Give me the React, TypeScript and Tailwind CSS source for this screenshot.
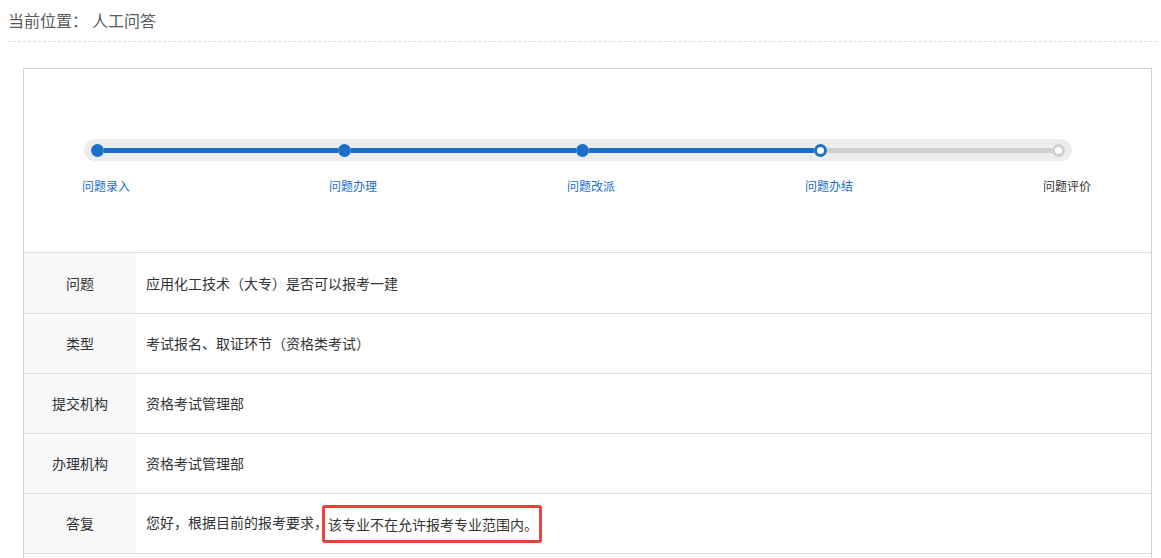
import React from "react";

const font = { fontFamily: '"Microsoft YaHei", "Noto Sans CJK SC", "Noto Sans", sans-serif' };

const rows: { label: string; value: React.ReactNode }[] = [
  { label: "问题", value: "应用化工技术（大专）是否可以报考一建" },
  { label: "类型", value: "考试报名、取证环节（资格类考试）" },
  { label: "提交机构", value: "资格考试管理部" },
  { label: "办理机构", value: "资格考试管理部" },
  {
    label: "答复",
    value: (
      <>
        您好，根据目前的报考要求，
        <span className="inline-block h-[38px] leading-[32px] border-[3px] border-[#e8453c] rounded-[3px] ml-[-6px] pl-[3px] pr-[1px] align-middle">
          该专业不在允许报考专业范围内。
        </span>
      </>
    ),
  },
];

export default function App() {
  return (
    <div className="w-[1161px] h-[558px] overflow-hidden bg-white pl-[8px] pr-[4px] [text-spacing-trim:space-all]" style={font}>
      <div className="pt-[9px] pb-[10px] border-b border-dashed border-[#dddddd] text-[16px] leading-[22px] text-[#5a5a5a] flex">
        <span>当前位置：</span>
        <span className="ml-[4px]">人工问答</span>
      </div>
      <div className="mt-[26px] ml-[15px] mr-[5px] border border-[#d2d2d2]">
        <div className="pt-[70px] pb-[58px] pl-[60px]">
          <div className="w-[988px] h-[22px] rounded-full bg-[#ededed] flex items-center px-[7px]">
            <div className="w-[13px] h-[13px] rounded-full bg-[#1a6fc9] flex-none" />
            <div className="w-[234px] h-[5px] bg-[#1a6fc9] flex-none" />
            <div className="w-[13px] h-[13px] rounded-full bg-[#1a6fc9] flex-none" />
            <div className="w-[225px] h-[5px] bg-[#1a6fc9] flex-none" />
            <div className="w-[13px] h-[13px] rounded-full bg-[#1a6fc9] flex-none" />
            <div className="w-[225px] h-[5px] bg-[#1a6fc9] flex-none" />
            <div className="w-[13px] h-[13px] rounded-full bg-white border-[3px] border-[#1a6fc9] flex-none" />
            <div className="w-[225px] h-[5px] bg-[#d0d0d0] flex-none" />
            <div className="w-[13px] h-[13px] rounded-full bg-white border-[3px] border-[#d0d0d0] flex-none" />
          </div>
          <div className="flex mt-[17px] ml-[-2px] text-[12px] leading-[16px]">
            <div className="w-[48px] flex-none text-[#1a6fc9] whitespace-nowrap">问题录入</div>
            <div className="w-[199px] flex-none" />
            <div className="w-[48px] flex-none text-[#1a6fc9] whitespace-nowrap">问题办理</div>
            <div className="w-[190px] flex-none" />
            <div className="w-[48px] flex-none text-[#1a6fc9] whitespace-nowrap">问题改派</div>
            <div className="w-[190px] flex-none" />
            <div className="w-[48px] flex-none text-[#1a6fc9] whitespace-nowrap">问题办结</div>
            <div className="w-[190px] flex-none" />
            <div className="w-[48px] flex-none text-[#333333] whitespace-nowrap">问题评价</div>
          </div>
        </div>
        <div className="text-[14px] text-[#333333]">
          {rows.map((r, i) => (
            <div key={r.label} className={`flex border-t border-[#dddddd] ${i === 0 ? "h-[61px]" : "h-[60px]"}`}>
              <div className="w-[112px] flex-none bg-[#f7f8fa] flex items-center justify-center">{r.label}</div>
              <div className="flex-1 flex items-center pl-[10px]">
                <div>{r.value}</div>
              </div>
            </div>
          ))}
          <div className="flex h-[60px] border-t border-[#dddddd]">
            <div className="w-[112px] flex-none bg-[#f7f8fa]" />
            <div className="flex-1" />
          </div>
        </div>
      </div>
    </div>
  );
}
